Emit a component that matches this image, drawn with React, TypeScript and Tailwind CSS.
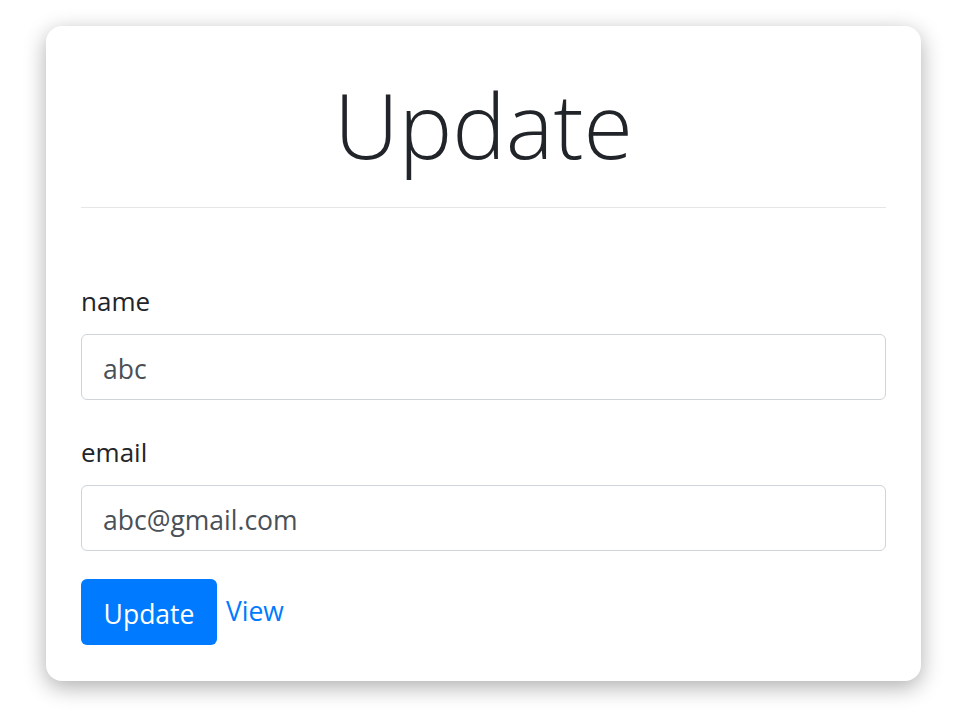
export default function App() {
  return (
    <div className="min-h-[716px] bg-white pt-[26px] pl-[46px] font-['Open_Sans','Noto_Sans',sans-serif]">
      <div className="w-[875px] h-[655px] bg-white rounded-[16px] shadow-[0_6px_22px_rgba(0,0,0,0.32)] px-[35px] pt-[41px] pb-[36px] flex flex-col">
        <h1 className="text-center text-[90px] leading-[115px] font-light text-[#212529]">Update</h1>
        <hr className="mt-[25px] border-0 border-t border-[#e6e6e6]" />

        <form className="mt-[73px]">
          <div className="mb-[32px]">
            <label className="block h-[40px] leading-[40px] text-[26px] text-[#212529] mb-[13px]">name</label>
            <input
              type="text"
              defaultValue="abc"
              className="block w-full h-[66px] px-[21px] pt-[3px] border border-[#ced4da] rounded-[6px] text-[26.5px] text-[#495057] outline-none"
            />
          </div>
          <div className="mb-[28px]">
            <label className="block h-[40px] leading-[40px] text-[26px] text-[#212529] mb-[13px]">email</label>
            <input
              type="text"
              defaultValue="abc@gmail.com"
              className="block w-full h-[66px] px-[21px] pt-[3px] border border-[#ced4da] rounded-[6px] text-[26.5px] text-[#495057] outline-none"
            />
          </div>
          <div className="flex items-start">
            <button
              type="button"
              className="h-[66px] w-[136px] pt-[5px] bg-[#007bff] text-white text-[26.5px] rounded-[6px]"
            >
              Update
            </button>
            <a href="#" className="ml-[9px] text-[26.5px] leading-[64px] text-[#007bff]">View</a>
          </div>
        </form>
      </div>
    </div>
  );
}
